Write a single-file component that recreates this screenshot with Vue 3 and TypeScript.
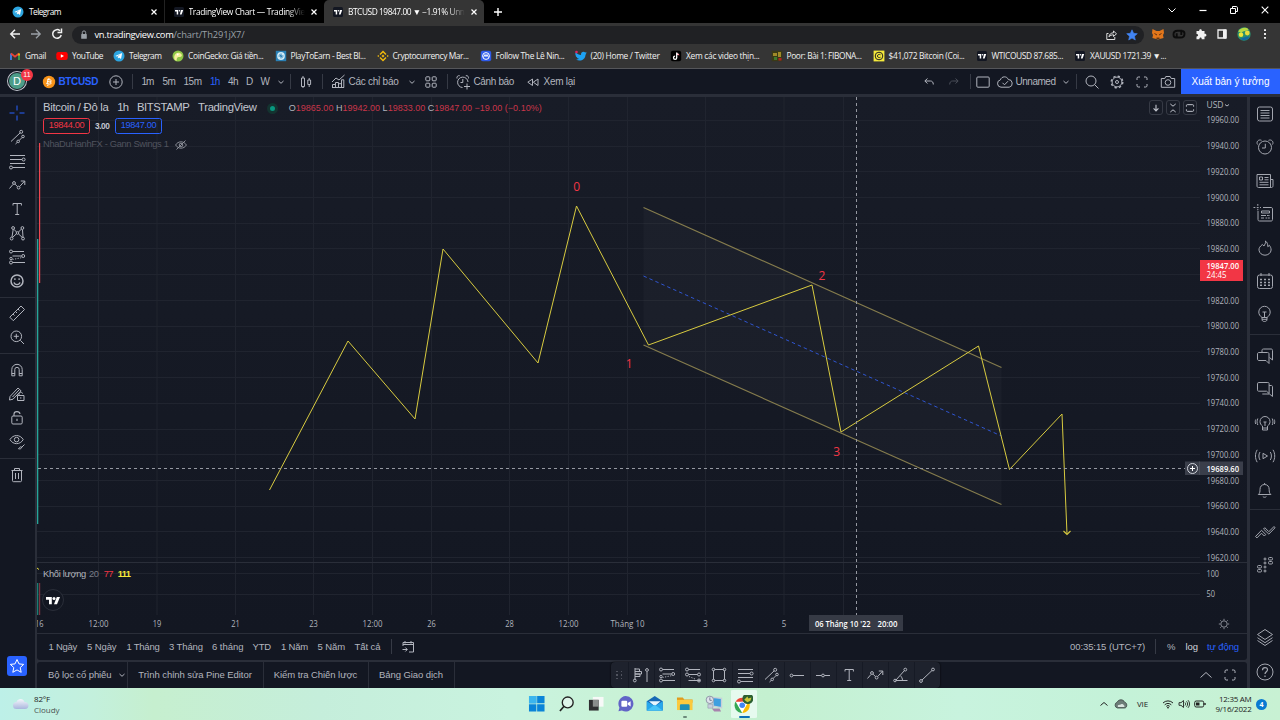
<script setup lang="ts">
import { h, type Directive, type FunctionalComponent } from 'vue'

/* Icons are drawn on an 18 x 18 grid, centred on 9,9. */
const icons: Record<string, string> = {
  cross: '<path d="M9 1.5v5M9 11.5v5M1.5 9h5M11.5 9h5"/>',
  parallel: '<path d="M3 13.5 12.2 4.8M7.5 16 9.3 14.3M11 12.6l3.2-3.2"/><circle cx="13.2" cy="3.8" r="1.5"/><circle cx="15" cy="8.5" r="1.3"/><circle cx="10.2" cy="13.4" r="1.3"/>',
  fib: '<path d="M2 3.5h15M2 7.5h12M2 11.5h15M4.8 15.5H17"/><circle cx="15.6" cy="7.5" r="1.5"/><circle cx="3" cy="15.5" r="1.5"/>',
  path: '<path d="M1.5 12.5 5 8.4M7.2 8.2l2.2 2.4M11.8 10.4 16.5 5.2M12.8 5h4v4"/><circle cx="6" cy="7" r="1.4"/><circle cx="10.6" cy="11.6" r="1.4"/>',
  text: '<path d="M5 5.5v-2h8.400v2M9.200 3.500v11M7.200 14.500h4"/>',
  pattern: '<path d="M4 13 5.200 5.500M5.800 5.200 8.500 8M10.500 8l3-3M14.500 5.800 15 13M4.500 13.500l4-3.800M10.400 9.800l4 3.800"/><circle cx="3.600" cy="14.600" r="1.400"/><circle cx="5.100" cy="4" r="1.400"/><circle cx="9.500" cy="9" r="1.300"/><circle cx="14.400" cy="4" r="1.400"/><circle cx="15" cy="14.600" r="1.400"/>',
  forecast: '<path d="M4.500 3.500H16M4.500 8h9M4.500 14.500H17"/><path d="M4.500 11.500 14.500 9.500" stroke-dasharray="1.200 1.400"/><circle cx="3" cy="3.500" r="1.500"/><circle cx="15.200" cy="8" r="1.500"/><circle cx="3" cy="14.500" r="1.500"/><circle cx="3" cy="10.500" r="1.200"/>',
  emoji: '<circle cx="9" cy="9" r="6" stroke-width="1.500"/><path d="M6 10.300c.8 3 5.200 3 6 0" stroke-width="1.200"/><path d="M6.900 6.300v1.700M11.100 6.300v1.700" stroke-width="1.300"/>',
  ruler: '<path d="M1.800 13.200 13 2l3.500 3.500L5.300 16.700zM5 10l1.500 1.500M7.500 7.500 9 9M10 5l1.500 1.500"/>',
  zoomin: '<circle cx="8.300" cy="8.300" r="5.300"/><path d="m12.300 12.300 3.700 3.700M5.800 8.300h5M8.300 5.800v5"/>',
  magnet: '<path d="M3.800 14.800V8.500a5.200 5.200 0 0 1 10.400 0v6.300h-3V8.500a2.200 2.200 0 0 0-4.400 0v6.300zM3.800 12.500h3M11.200 12.500h3"/>',
  penlock: '<path d="m2 11.500 8-8.500 3 2.800-8 8.400-3.500.8zM4.500 12 11 5"/><path d="M9.500 10.500h6.500v5H9.500zM11 10.500V9c0-2.200 3.500-2.200 3.500-.5M12.800 12.200v1.500"/>',
  lock: '<rect x="3.800" y="7" width="10.400" height="8" rx="1.200"/><path d="M6 7V5c0-3 5.500-3.400 6 0M9 9.800v2.200" stroke-width="1.100"/>',
  eye: '<path d="M2 6.600c3-5.400 10.200-5.400 13.200 0-3 5.400-10.200 5.400-13.200 0z"/><circle cx="8.600" cy="6.600" r="2.300"/><path d="M16.500 11.500l-3 3M10.500 15.800c1.800.4 3.400-.3 3.200-1.800-1.500-.8-2 .5-3.200 1.800z"/>',
  trash: '<path d="M3.500 4.500h11M6.500 4.500v-2h5v2M4.500 4.500v10.200c0 .6.400 1 1 1h7c.6 0 1-.4 1-1V4.500M7.500 7v6M10.500 7v6"/>',
  star: '<path d="m9 2.500 2 4.400 4.700.5-3.500 3.200 1 4.700L9 12.900l-4.200 2.400 1-4.700-3.500-3.200 4.700-.5z"/>',
  plusc: '<circle cx="9" cy="9" r="6.200"/><path d="M6 9h6M9 6v6"/>',
  chev: '<path d="m6.500 8 2.500 2.300L11.500 8"/>',
  candles: '<path d="M4.500 5h3v8.500h-3zM6 3v2M6 13.500V15M10.800 7h2.800v4.500h-2.800zM12.200 5v2M12.200 11.500V14"/>',
  indic: '<path d="M3 9 7 5l3 2 5.500-5M3.500 14.500v-3h3v3M6.500 14.500V9.500h3v5M9.500 14.500v-3.800h3v3.800M12.500 14.500V6.800h2.300v7.700zM3 14.500h12"/>',
  grid4: '<rect x="3.800" y="3.800" width="4" height="4" rx=".8"/><rect x="10.200" y="3.800" width="4" height="4" rx=".8"/><rect x="3.800" y="10.200" width="4" height="4" rx=".8"/><rect x="10.200" y="10.200" width="4" height="4" rx=".8"/>',
  alarmp: '<path d="M8.500 14.500A5.200 5.200 0 1 1 14 9M3 5.500C2.500 3.500 4 2.300 5.700 2.700M11.800 2.700c2-.4 3.200 1.200 2.600 2.800M8.800 6v3.500H6.500M13 10.500v6M10 13.500h6"/>',
  rewind: '<path d="M8.500 6v6.500L3.800 9.200zM14 6v6.500L9.300 9.200z"/>',
  undo: '<path d="M7.500 5.500 4.800 8l2.700 2.500M5 8h5.500c1.700 0 2.800 1.200 2.800 3.500"/>',
  redo: '<path d="M10.500 5.500 13.200 8l-2.700 2.500M13 8H7.500c-1.700 0-2.800 1.200-2.800 3.500"/>',
  rect: '<rect x="2.800" y="4" width="12.400" height="10.200" rx="1"/>',
  cloud: '<path d="M5 14.200a3.700 3.700 0 0 1-.6-7.300C5.500 3 11 2.800 12.300 6.500a3.900 3.900 0 0 1 .9 7.700zM6.500 9.800l2 2 3.500-3.600"/>',
  search: '<circle cx="8" cy="8" r="5"/><path d="m11.700 11.700 3.800 3.800"/>',
  gear: '<circle cx="9" cy="9" r="4.900"/><circle cx="9" cy="9" r="1.500"/><circle cx="9" cy="9" r="5.800" stroke-dasharray="2.300 2.260" stroke-width="1.400"/>',
  full: '<path d="M4 7V5.200c0-.7.500-1.200 1.200-1.200H7M11 4h1.800c.7 0 1.200.5 1.200 1.200V7M14 11v1.800c0 .7-.5 1.200-1.200 1.200H11M7 14H5.200c-.7 0-1.200-.5-1.200-1.200V11"/>',
  camera: '<path d="M2.300 5.500h3.500l1-2h4.400l1 2h3.500v8.800H2.300z"/><circle cx="9" cy="9.500" r="2.800"/>',
  list: '<rect x="1.500" y="2" width="15" height="14" rx="2"/><path d="M4.500 5.500h9M4.500 8h9M4.500 10.500h9M4.500 13h9"/>',
  alarm: '<circle cx="9" cy="9.500" r="6.500"/><path d="M9.300 5.800v4.200H6M1.500 6.500C0 4 2.300 1 5.500 2.300M16.500 6.500c1.500-2.500-.8-5.500-4-4.200"/>',
  news: '<path d="M1 2.500h13.500v13H2.500c-1 0-1.500-.6-1.500-1.500zM14.500 7.500H17v6.200c0 1-.5 1.800-1.500 1.800h-1.200M3.500 5h3v3h-3zM8.500 5.500h4M8.500 7.800h4M3.500 10.300h9M3.500 12.800h9"/>',
  notes: '<path d="M2 6v8.500c0 1 .5 1.500 1.500 1.500H15c1 0 1.500-.5 1.500-1.500V4c0-1-.5-1.500-1.500-1.500H7M5.500 6h8v2h-8zM5 10.500h5M5 13h3"/><path d="M-2.500 2.500h2M.8 2.500H3M4 2.500h1M1.800-1v2M1.800 3.800v1.500M11 10.500h3M9.500 13H14" stroke-dasharray="1.800 .7"/>',
  fire: '<path d="M9.500 2c.5 2.500-1 3.500-1.500 5L6.300 5.500C4 7.500 2.700 9 3 11.200c.4 3 3 5 6 5s6-2.200 6.100-5.200c0-2-.8-3.500-1.700-4.700l-1.600 1.400C11.900 5 11 3 9.500 2z"/>',
  calendar: '<rect x="1.500" y="3" width="15" height="13.500" rx="2"/><path d="M5 1v3M13 1v3"/><path d="M4 7.500h2M8 7.500h2M12 7.500h2M4 10.500h2M8 10.500h2M12 10.500h2M4 13.300h2M8 13.300h2M12 13.300h2" stroke-width="1.500"/>',
  bulb: '<path d="M6 12.500C4 11 2.800 9.500 2.800 7a5.700 5.700 0 0 1 11.400 0c0 2.500-1.200 4-3.200 5.500v1.800c0 1.600-1 2.200-2.500 2.200S6 15.900 6 14.300zM6 12.500h5M6 14.300h5M6.500 7h4M8.500 7v5"/>',
  chats: '<path d="M6 5V3.500c0-1 .5-1.500 1.500-1.500H15c1 0 1.500.5 1.500 1.500V13l-3-2.500M3 5.500h8.500c1 0 1.500.5 1.500 1.500v9.500l-3-3H3c-1 0-1.500-.5-1.500-1.500V7c0-1 .5-1.500 1.500-1.500z"/>',
  chat2: '<path d="M2.800 2.500h9c1 0 1.300.4 1.300 1.300v9.700l-2.600-2.300H2.800c-1 0-1.300-.4-1.300-1.300V3.800c0-.9.400-1.300 1.300-1.300zM13.100 5.500h2c1 0 1.400.5 1.400 1.300v9.700l-3-2.500H6.300"/>',
  bulbs: '<path d="M6.500 12C5 11 4 9.600 4 7.500a5 5 0 0 1 10 0c0 2.100-1 3.500-2.500 4.500v2h-5zM6.500 14v2h5v-2M9 8v4M7.500 8h3M1.800 4.500c-1 2-1 4.500 0 6.500M16.200 4.500c1 2 1 4.500 0 6.500M-.3 5.500c-.6 1.500-.6 3 0 4.500M18.300 5.500c.6 1.500.6 3 0 4.500"/>',
  stream: '<path d="M7 6.300v5.400l4.500-2.700zM4 5c-1.500 2.300-1.500 5.700 0 8M14.300 5c1.500 2.300 1.500 5.700 0 8M1.200 2.800c-2.300 3.800-2.300 8.600 0 12.400M17 2.800c2.300 3.800 2.300 8.600 0 12.400"/>',
  bell: '<path d="M2.300 13.500c1.700-1.300 1.700-3 1.700-5 0-3 1.700-5 4.600-5s4.600 2 4.600 5c0 2 0 3.700 1.700 5zM6.800 15.500c.8 1 2.800 1 3.600 0M8.600 3.500V2"/>',
  waves: '<path d="m-.5 13.500 6-6.200 4.300 4.200 -1.500 1.500-2.800-2.800-4.500 4.700zM7.500 6l1.300-1.300 4 4L18 3.500l1 1.300-6.200 6.300z"/>',
  dom: '<g><rect x="1.500" y="9.500" width="4" height="2.500" rx="1"/><rect x="1.500" y="13.500" width="4" height="2.500" rx="1"/><rect x="12.500" y="1.500" width="4" height="2.500" rx="1"/><rect x="12.500" y="5.500" width="4" height="2.500" rx="1"/><circle cx="9" cy="3" r="1"/><circle cx="9" cy="7" r="1"/><circle cx="9" cy="11" r="1"/><circle cx="9" cy="15" r="1"/></g>',
  layers: '<path d="m9 .5 7.500 5L9 10.500l-7.500-5zM1.500 8.700 9 13.700l7.500-5M1.500 11.500 9 16.500l7.500-5"/>',
  help: '<circle cx="9" cy="9" r="8"/><path d="M6.500 7.200c0-3.500 5-3.400 5-.5 0 2-2.500 2-2.500 4.300M9 12.500v1.500" stroke-width="1.200"/>',
  profile: '<path d="M3 2v12M3 3h4.500v2.500H3M3 5.500h6.500V8H3M3 8h5v2.500H3M15 6v10"/><circle cx="2.800" cy="14.500" r="1.400"/><circle cx="15" cy="4" r="1.400"/>',
  long: '<path d="M4.500 3.500H16M4.500 8.500h9M4.500 14.500H16"/><path d="M5 10.500l6 2.500" stroke-dasharray="1.200 1.400"/><circle cx="3" cy="3.500" r="1.500"/><circle cx="15" cy="8.500" r="1.500"/><circle cx="3" cy="8.500" r="1.500"/><circle cx="15" cy="14.500" r="1.500"/>',
  square: '<path d="M3.500 4.500v9M14.500 4.500v9M4.500 3.500h9M4.500 14.500h9"/><circle cx="3.500" cy="3.500" r="1.300"/><circle cx="14.500" cy="3.500" r="1.300"/><circle cx="3.500" cy="14.500" r="1.300"/><circle cx="14.500" cy="14.500" r="1.300"/>',
  ray: '<path d="M5 9.500h11"/><circle cx="3.500" cy="9.500" r="1.400"/>',
  hline: '<path d="M2 9.500h5.500M10.500 9.500H16"/><circle cx="9" cy="9.500" r="1.400"/>',
  angle: '<path d="M3.500 14.500h12M4 14 12.500 4.500M10.500 14.500c0-2-.8-3.500-2-4.700"/><circle cx="13.300" cy="3.600" r="1.400"/><circle cx="3" cy="14.500" r="1.300"/>',
  line: '<path d="M4 14 14 4.500"/><circle cx="3" cy="15" r="1.400"/><circle cx="15" cy="3.500" r="1.400"/>',
  goto: '<path d="M4 8V4.500h10.500v9.500H10M4 6.500h10.500M6 3v2.500M12 3v2.500M3.500 11.500h4.500M6.300 9.500l2 2-2 2"/>',
  up: '<path d="m3.500 11.500 5.500-5 5.500 5"/>',
  sun: '<circle cx="9" cy="9" r="3.200"/><path d="M9 3.800v1.500M9 12.700v1.500M3.800 9h1.500M12.700 9h1.500M5.300 5.300l1 1M11.700 11.700l1 1M12.700 5.300l-1 1M6.300 11.700l-1 1"/>',
  down: '<path d="M9 5.500v6.500M6.300 9.500 9 12.200l2.700-2.700" stroke-width="1.200"/>',
  collapse: '<path d="M6 4.500 9 7l3-2.500M6 13.500 9 11l3 2.500" stroke-width="1.100"/>',
  restore: '<path d="M5 7.500V6.300c0-.6.4-1 1-1h6c.6 0 1 .4 1 1v1.200M5 10.500v1.200c0 .6.400 1 1 1h6c.6 0 1-.4 1-1v-1.200" stroke-width="1.100"/>',
  hidden: '<path d="M3 9c2.700-4.700 9.300-4.700 12 0-2.700 4.700-9.300 4.700-12 0zM4 14 14 4"/><circle cx="9" cy="9" r="2"/>',
  back: '<path d="M14 9H5M9 4.800 4.800 9 9 13.200" stroke-width="1.500"/>',
  fwd: '<path d="M4 9h9M9 4.800 13.200 9 9 13.200" stroke-width="1.300"/>',
  reload: '<path d="M13.200 10A4.300 4.300 0 1 1 12 5.800M13.500 3.500v4h-4" stroke-width="1.500"/>',
  padlock: '<rect x="6.200" y="8" width="5.600" height="4.800" rx=".6" fill="currentColor" stroke="none"/><path d="M7.300 8V6.600a1.700 1.700 0 0 1 3.400 0V8"/>',
  share: '<path d="M6.500 7.500H4.800v6h8V11M7 10.800c.3-2.500 2-4 4.500-4V5l3 2.800-3 2.700V8.800C9.500 8.800 8 9.500 7 10.800z" stroke-width=".9"/>',
  bstar: '<path d="m9 3.800 1.600 3.500 3.700.4-2.800 2.500.8 3.800L9 12.100 5.700 14l.8-3.800-2.800-2.500 3.700-.4z" fill="#4285f4" stroke="#4285f4" stroke-width=".6"/>',
  fox: '<path d="m3.500 4 4 2h3l4-2 .5 4-1 2 .6 3-3 .8L9 14.500 6.400 13.800l-3-.8.600-3-1-2z" fill="#e2761b" stroke="none"/><path d="M5.500 8.500 8 10M12.500 8.500 10 10" stroke="#63300d"/><path d="M7.500 12.700h3v1h-3z" fill="#2a1a10" stroke="none"/>',
  ext: '<path d="M6 12.500c-2 0-2.500-1-2.500-3C3.500 7 5 5.800 7.500 5.800h3.800V10M12 6c2 0 2.500 1 2.500 2.700 0 2.500-1.500 3.800-4 3.800H6.700V8.300" stroke="#0c0c0c" stroke-width="1.900"/>',
  puzzle: '<path d="M4.500 6h2.700c-.5-2.500 3.100-2.500 2.600 0h2.700v2.800c2.600-.5 2.600 3.200 0 2.700v2.700h-2.800c.3-2.300-2.500-2.300-2.300 0H4.500v-2.800c2.200.3 2.200-2.500 0-2.300z" fill="currentColor" stroke="none"/>',
  side: '<path d="M5 5h8v8H5z" stroke-width="1.300"/><path d="M10.500 5H13v8h-2.500z" fill="currentColor"/>',
  globe: '<circle cx="9" cy="9" r="6.700" fill="#2c8f6c" stroke="none"/><path d="M3.200 6.500C5 2.500 11 1.800 13.500 4.200c-1.500 2.500-5.500.8-7 3.800z" fill="#b6d844" stroke="none"/><circle cx="6" cy="9.800" r="2.300" fill="#efe53a" stroke="none"/><circle cx="12.300" cy="8" r="2.400" fill="#e9dc3e" stroke="none"/><path d="M5 13.500c3 0 5-2.500 9.500-2-1.500 4.200-6.500 5-9.500 2z" fill="#1268a2" stroke="none"/>',
  dots: '<path d="M9 4.200v1.900M9 8v1.900M9 11.900v1.900" stroke-width="1.900"/>',
  x: '<path d="m6.500 6.500 5 5M11.500 6.500l-5 5" stroke-width="1.200"/>',
  plus: '<path d="M5 9h8M9 5v8" stroke-width="1.400"/>',
  wchev: '<path d="M5.500 7.500 9 11l3.500-3.500"/>',
  wmin: '<path d="M5.500 9.500h7" stroke-width="1.200"/>',
  wres: '<path d="M5.500 7.500h5v5h-5zM7.500 7V5.500h3.700c.8 0 1.300.5 1.300 1.300v3.700H11"/>',
  wclose: '<path d="m5.700 5.700 6.600 6.600M12.300 5.700l-6.600 6.600" stroke-width="1.100"/>',
  telegram: '<circle cx="9" cy="9" r="5.500" fill="#2ca5e0" stroke="none"/><path d="m5.200 9 7-2.900-1.200 6-2-1.500-1 1-.3-1.800 3-2.600-3.800 2.400z" fill="#fff" stroke="none"/>',
  tv: '<rect x="4" y="4" width="10" height="10" rx="1.500" fill="#131722" stroke="none"/><path d="M5 7h3.200v4.500H6.700V8.500H5zM11 7h2.200l-1.600 4.500H9.900z" fill="#fff" stroke="none"/><circle cx="9.500" cy="7.700" r=".8" fill="#fff" stroke="none"/>',
  gmail: '<path d="M5 13V6.500" stroke="#4285f4" stroke-width="1.700"/><path d="M13 13V6.500" stroke="#34a853" stroke-width="1.700"/><path d="M5 6.500 9 9.700l4-3.200" stroke="#ea4335" stroke-width="1.800"/><path d="M13 6.500v2" stroke="#fbbc04" stroke-width="1.700"/>',
  youtube: '<rect x="3.300" y="5" width="11.400" height="8" rx="2.200" fill="#f00" stroke="none"/><path d="M7.800 7.200v3.600L11 9z" fill="#fff" stroke="none"/>',
  gecko: '<circle cx="9" cy="9" r="5.500" fill="#8dc647" stroke="none"/><path d="M5.500 12.500c-1-4 1-7 4-6.800 2 0 3.800 1.800 3.300 3.300-1 1.500-3.300.5-4.300 1.500s-.7 2.500-1 3.500z" fill="#f5ef9a" stroke="none"/><circle cx="8.700" cy="7.500" r=".9" fill="#fff" stroke="none"/>',
  p2e: '<rect x="3.800" y="3.800" width="10.400" height="10.400" fill="#2a80b5" stroke="none"/><circle cx="9" cy="9" r="3.900" fill="#cfeaf6" stroke="none"/><path d="M6.500 9h5M9 6.500v5M7.500 7.500l3 3" stroke="#2a80b5"/>',
  bnb: '<path d="m6 7.500 3-3 3 3M6 10.500l3 3 3-3" stroke="#f0b90b" stroke-width="1.500"/><path d="m9 7.500 1.500 1.500L9 10.500 7.500 9zM4.300 8l1 1-1 1-1-1zM13.700 8l1 1-1 1-1-1z" fill="#f0b90b" stroke="none"/>',
  cmc: '<rect x="3.800" y="3.800" width="10.400" height="10.400" rx="2" fill="#2f5bea" stroke="none"/><circle cx="9" cy="9" r="3.400" stroke="#fff"/><path d="M6.500 10.500 8 7.500l1 2.200 1-2.200 1.500 3" stroke="#fff" stroke-width=".9"/>',
  twitter: '<path d="M4 12.500c1.300.2 2.300-.1 3-.7-1.300-.1-2-1-2.100-1.500-1-.6-1.300-1.500-1.200-2.200C3 7 3.300 6 3.900 5.400 5.300 7 7 7.800 9 7.900c-.3-3 2.700-4 4.200-2.400l1.500-.4-.9 1.500.7 0-1 1.100c-.1 5-5.500 7.500-9.500 4.800z" fill="#1da1f2" stroke="none"/><circle cx="4.500" cy="5" r="1.300" fill="#e0245e" stroke="none"/>',
  tiktok: '<rect x="3.800" y="3.800" width="10.400" height="10.400" rx="2" fill="#000" stroke="none"/><path d="M9.700 5.500v5.200a1.600 1.600 0 1 1-1.600-1.600M9.700 5.500c.2 1.400 1 2 2.300 2.100" stroke="#fff" stroke-width="1.300"/><path d="M10.500 6.700c.4.800 1 1.300 1.900 1.400" stroke="#fe2c55" stroke-width=".7"/>',
  poor: '<rect x="3.800" y="3.800" width="10.400" height="10.400" fill="#3a3a16" stroke="none"/><path d="M5 6h4v3H5zM10 5h3v5h-3z" fill="#a08a28" stroke="none"/><path d="M6 10h3v3H6z" fill="#3f7a2c" stroke="none"/><path d="M10.500 11h3v2.500h-3z" fill="#b32222" stroke="none"/>',
  coindesk: '<rect x="3.600" y="3.600" width="10.800" height="10.800" fill="#f5ea3c" stroke="none"/><circle cx="9" cy="9" r="3.800" stroke="#222"/><path d="M10.500 7.800c-1-.8-3-.5-3 1.200s2 2 3 1.200" stroke="#222"/>'
}

const Ico: FunctionalComponent<{ n: string }> = (props) =>
  h('svg', { class: 'ico', width: 18, height: 18, viewBox: '0 0 18 18', innerHTML: icons[props.n] })
Ico.props = ['n']

/* Tracks a label out or in so that it fills the given width. */
const vFit: Directive<HTMLElement, number> = {
  mounted(el, { value }) {
    const range = document.createRange()
    range.selectNodeContents(el)
    const width = range.getBoundingClientRect().width
    const count = (el.textContent ?? '').length
    if (value && count > 1) el.style.letterSpacing = `${(value - width) / count}px`
  }
}

interface Cell { t?: string; i?: string; w: number; f?: number; c?: string }

const tabs = [
  { i: 'telegram', t: 'Telegram', w: 165, f: 32, c: 'first' },
  { i: 'tv', t: 'TradingView Chart — TradingVie', w: 159, f: 116.5, c: '' },
  { i: 'tv', t: 'BTCUSD 19847.00 ▼ −1.91% Unn', w: 160, f: 116.5, c: 'active' }
]
const bookmarks: Cell[] = [
  { i: 'gmail', t: 'Gmail', w: 47, f: 21 },
  { i: 'youtube', t: 'YouTube', w: 57, f: 31 },
  { i: 'telegram', t: 'Telegram', w: 59, f: 32.5 },
  { i: 'gecko', t: 'CoinGecko: Giá tiền...', w: 102.5, f: 75.5 },
  { i: 'p2e', t: 'PlayToEarn - Best Bl...', w: 102, f: 75 },
  { i: 'bnb', t: 'Cryptocurrency Mar...', w: 103, f: 76 },
  { i: 'cmc', t: 'Follow The Lê Nin...', w: 95, f: 69 },
  { i: 'twitter', t: '(20) Home / Twitter', w: 95.5, f: 69 },
  { i: 'tiktok', t: 'Xem các video thịn...', w: 100.5, f: 73.5 },
  { i: 'poor', t: 'Poor: Bài 1: FIBONA...', w: 102, f: 75 },
  { i: 'coindesk', t: '$41,072 Bitcoin (Coi...', w: 103, f: 76 },
  { i: 'tv', t: 'WTICOUSD 87.685...', w: 98.5, f: 71.5 },
  { i: 'tv', t: 'XAUUSD 1721.39 ▼...', w: 100, f: 76 }
]
const header: Cell[] = [
  { t: '1m', w: 21, f: 12 }, { t: '5m', w: 21, f: 13 }, { t: '15m', w: 26.5, f: 18 },
  { t: '1h', w: 18, f: 9.5, c: 'on' }, { t: '4h', w: 18, f: 10 }, { t: 'D', w: 14.5 }, { t: 'W', w: 11.5 },
  { i: 'chev', w: 18 }, { w: 7, c: 'bar' }, { i: 'candles', w: 25 }, { w: 7, c: 'bar' },
  { i: 'indic', w: 19.5 }, { t: 'Các chỉ báo', w: 54, f: 50 }, { i: 'chev', w: 12 }, { i: 'grid4', w: 32, c: 'mid' },
  { w: 7, c: 'bar' }, { i: 'alarmp', w: 20 }, { t: 'Cảnh báo', w: 50, f: 40.5 }, { i: 'rewind', w: 20 },
  { t: 'Xem lại', w: 40, f: 31.5 }
]
const headerRight: Cell[] = [
  { i: 'undo', w: 25 }, { i: 'redo', w: 25, c: 'dim' }, { w: 4.5, c: 'bar' }, { i: 'rect', w: 22 },
  { i: 'cloud', w: 19.5 }, { t: 'Unnamed', w: 41, f: 40 }, { i: 'chev', w: 19.5 }, { w: 6.5, c: 'bar' },
  { i: 'search', w: 25.5 }, { i: 'gear', w: 25 }, { i: 'full', w: 25.5 }, { i: 'camera', w: 22.5 }
]
const leftGroups = [
  ['cross', 'parallel', 'fib', 'path', 'text', 'pattern', 'forecast', 'emoji'],
  ['ruler', 'zoomin'],
  ['magnet', 'penlock', 'lock', 'eye'],
  ['trash']
]
const rightGroups = [
  ['list', 'alarm', 'news', 'notes', 'fire', 'calendar', 'bulb'],
  ['chats', 'chat2', 'bulbs', 'stream', 'bell'],
  ['waves', 'dom']
]
const ranges: Cell[] = [
  { t: '1 Ngày', w: 38.5, f: 28.5 }, { t: '5 Ngày', w: 39.5, f: 29.5 }, { t: '1 Tháng', w: 42.5, f: 33 },
  { t: '3 Tháng', w: 43, f: 34 }, { t: '6 tháng', w: 40.5, f: 31.5 }, { t: 'YTD', w: 28.5, f: 18.5 },
  { t: '1 Năm', w: 36.5, f: 27 }, { t: '5 Năm', w: 37, f: 27.5 }, { t: 'Tất cả', w: 36, f: 26 }
]
const panels = [
  { t: 'Bộ lọc cổ phiếu', w: 90.5, f: 63.5, drop: true },
  { t: 'Trình chỉnh sửa Pine Editor', w: 136, f: 113.5, drop: false },
  { t: 'Kiểm tra Chiến lược', w: 105, f: 83.5, drop: false },
  { t: 'Bảng Giao dịch', w: 86, f: 64, drop: false }
]
const favourites = ['profile', 'forecast', 'long', 'square', 'fib', 'parallel', 'ray', 'hline', 'text', 'path', 'angle', 'line']

/* Price scale: 20 points every 25.73 px. */
const prices = Array.from({ length: 18 }, (_, k) => ({ label: `${19960 - k * 20}.00`, y: 120.3 + k * 25.73 }))
const times = [
  { x: 98.5, t: '12:00', w: 20 }, { x: 157, t: '19', w: 8.5 }, { x: 235.5, t: '21', w: 8.5 }, { x: 313.5, t: '23', w: 8.5 },
  { x: 372.5, t: '12:00', w: 20 }, { x: 431.5, t: '26', w: 8.5 }, { x: 509.5, t: '28', w: 8.5 }, { x: 568.5, t: '12:00', w: 20 },
  { x: 627.5, t: 'Tháng 10', w: 34 }, { x: 705.5, t: '3', w: 4.5 }, { x: 784, t: '5', w: 4.5 }, { x: 843.5, t: '', w: 0 }
]
const swing = '269.5,490 348,341 415,419 443,249 538,363 576.5,206 648.5,345 812,285 841,432 978.5,346 1009.5,469.5 1062,414 1067,534'
const waves = [{ n: '0', x: 576.8, y: 190.5 }, { n: '1', x: 629.3, y: 368 }, { n: '2', x: 822, y: 279.5 }, { n: '3', x: 836.8, y: 455.5 }]
</script>

<template>
  <div class="desktop">
    <div class="tabstrip">
      <div v-for="(tab, k) in tabs" :key="k" class="tab" :class="tab.c" :style="{ width: tab.w + 'px' }">
        <Ico :n="tab.i" />
        <span class="tabtitle"><span v-fit="tab.f">{{ tab.t }}</span></span>
        <Ico n="x" class="tabx" />
      </div>
      <Ico n="plus" class="newtab" />
      <div class="winctl"><Ico n="wchev" /><Ico n="wmin" /><Ico n="wres" /><Ico n="wclose" /></div>
    </div>

    <div class="addressbar">
      <div class="nav"><Ico n="back" /><Ico n="fwd" class="faded" /><Ico n="reload" /></div>
      <div class="omnibox">
        <Ico n="padlock" class="faded" />
        <span class="host" v-fit="79">vn.tradingview.com</span><span class="rest" v-fit="71">/chart/Th291jX7/</span>
        <span class="omniright"><Ico n="share" /><Ico n="bstar" /></span>
      </div>
      <div class="exts"><Ico n="fox" /><Ico n="ext" /><Ico n="puzzle" /><Ico n="side" /><Ico n="globe" /><Ico n="dots" /></div>
    </div>

    <div class="bookmarks">
      <div v-for="b in bookmarks" :key="b.t" class="bookmark" :style="{ width: b.w + 'px' }">
        <Ico :n="b.i!" /><span v-fit="b.f!">{{ b.t }}</span>
      </div>
    </div>

    <div class="header">
      <div class="avatar"><span class="face">D</span><span class="count">11</span></div>
      <svg class="coin" width="14" height="14" viewBox="0 0 14 14"><circle cx="7" cy="7" r="6.200" fill="#f7931a" /><path d="M5.300 4.300l3.200.7c1.200.4 1 1.900-.4 1.900 1.600.3 1.300 2.400-.4 2.200l-3.200-.6M6 4.500 5 8.800M6 6.600l2 .4M7 3l-.3 1.500M6 9.500l-.3 1.500" fill="none" stroke="#fff" stroke-width="1" /></svg>
      <span class="symbol" v-fit="39.500">BTCUSD</span>
      <Ico n="plusc" />
      <span class="bar first"></span>
      <span v-for="(c, k) in header" :key="k" class="cell" :class="c.c" :style="{ width: c.w + 'px' }">
        <Ico v-if="c.i" :n="c.i" /><span v-else-if="c.t" v-fit="c.f ?? 0">{{ c.t }}</span>
      </span>
      <span class="grow"></span>
      <span v-for="(c, k) in headerRight" :key="'r' + k" class="cell" :class="c.c" :style="{ width: c.w + 'px' }">
        <Ico v-if="c.i" :n="c.i" /><span v-else-if="c.t" v-fit="c.f ?? 0">{{ c.t }}</span>
      </span>
      <button class="publish"><span v-fit="78">Xuất bản ý tưởng</span></button>
    </div>

    <div class="workspace">
      <aside class="tools">
        <div v-for="(g, k) in leftGroups" :key="k" class="group" :class="'g' + k">
          <Ico v-for="n in g" :key="n" :n="n" :class="{ blue: n === 'cross' }" />
        </div>
        <div class="fav"><Ico n="star" /></div>
      </aside>

      <main class="center">
        <section class="chart">
          <svg class="canvas" width="1210" height="536" viewBox="37 97 1210 536">
            <g stroke="#20242f">
              <line v-for="t in times" :key="t.x" :x1="t.x" :x2="t.x" y1="97" y2="615" />
              <line v-for="p in prices" :key="p.y" x1="37" x2="1200" :y1="Math.floor(p.y) + .5" :y2="Math.floor(p.y) + .5" />
              <line x1="37" x2="1200" y1="573.5" y2="573.5" />
              <line x1="37" x2="1200" y1="594.5" y2="594.5" />
              <line x1="37" x2="1247" y1="562.5" y2="562.5" stroke="#2a2e39" />
            </g>
            <rect x="37" y="239" width="1.300" height="285" fill="#26a69a" />
            <rect x="39" y="143" width="1.200" height="140" fill="#ef4650" />
            <rect x="37" y="583" width="1.300" height="32" fill="#1d7d73" />
            <rect x="39" y="583" width="1.200" height="32" fill="#7d3440" />
            <path d="M37 568l2 1.500" stroke="#e8dd3b" />
            <path d="M643.500 207.500 1001.500 367.500V504.500L643.500 345z" fill="#fff" fill-opacity=".022" />
            <path d="M643.500 207.500 1001.500 367.500M643.500 345 1001.500 504.500" stroke="#857c4d" stroke-width="1.200" />
            <path d="M643.500 276 1001.500 436" stroke="#2f55d0" stroke-dasharray="3.500 3" />
            <polyline :points="swing" fill="none" stroke="#d8cb40" stroke-width="1" />
            <path d="M1063.500 531l3.500 3.500 3.500-3.500" fill="none" stroke="#d8cb40" stroke-width="1.100" />
            <path d="M856.500 97v518M38 468.500h1148" stroke="#9598a1" stroke-dasharray="3 3" />
            <text v-for="w in waves" :key="w.n" class="wave" :x="w.x" :y="w.y">{{ w.n }}</text>
            <g class="axis" lengthAdjust="spacingAndGlyphs">
              <template v-for="p in prices" :key="p.label"><text v-if="p.label !== '19840.00'" x="1206.500" :y="p.y + 3.100" textLength="32.500" lengthAdjust="spacingAndGlyphs">{{ p.label }}</text></template>
              <text x="1206.500" y="577" textLength="12.500" lengthAdjust="spacingAndGlyphs">100</text>
              <text x="1206.500" y="597" textLength="8.500" lengthAdjust="spacingAndGlyphs">50</text>
              <text x="1206.500" y="107.800" textLength="17" lengthAdjust="spacingAndGlyphs">USD</text>
              <path d="M1225 104.500l2 1.500 2-1.500" stroke="#b2b5be" fill="none" />
              <text x="35" y="627" textLength="8.500" lengthAdjust="spacingAndGlyphs">16</text>
              <template v-for="t in times" :key="t.x"><text v-if="t.t" :x="t.x - t.w / 2" y="627" :textLength="t.w" lengthAdjust="spacingAndGlyphs">{{ t.t }}</text></template>
            </g>
            <rect x="1200" y="260" width="43" height="21" fill="#f23645" />
            <g class="axis tag"><text x="1206.500" y="269.200" textLength="32.500" lengthAdjust="spacingAndGlyphs">19847.00</text><text x="1206.500" y="278.200" textLength="20" lengthAdjust="spacingAndGlyphs" class="thin">24:45</text></g>
            <rect x="1185" y="461.500" width="58" height="13.500" fill="#3a3e4a" />
            <path d="M1199.500 461.500v13.500" stroke="#4a4e59" />
            <circle cx="1192.500" cy="468.500" r="5" fill="none" stroke="#d1d4dc" /><path d="M1190 468.500h5M1192.500 466v5" stroke="#fff" />
            <g class="axis tag"><text x="1206.500" y="471.500" textLength="32.500" lengthAdjust="spacingAndGlyphs">19689.60</text></g>
            <rect x="809" y="615" width="94" height="16" fill="#363a45" />
            <g class="axis tag"><text x="815" y="627" textLength="55.500" lengthAdjust="spacingAndGlyphs">06 Tháng 10 '22</text><text x="877.500" y="627" textLength="20" lengthAdjust="spacingAndGlyphs">20:00</text></g>
          </svg>
          <div class="legend">
            <div class="title">
              <span v-fit="65.500">Bitcoin / Đô la</span><span v-fit="11">1h</span><span v-fit="52.500">BITSTAMP</span><span v-fit="58.500">TradingView</span>
              <i class="live"></i>
              <span class="ohlc" v-fit="253">O<b>19865.00</b> H<b>19942.00</b> L<b>19833.00</b> C<b>19847.00</b> <b>−19.00 (−0.10%)</b></span>
            </div>
            <div class="quotes"><span class="sell"><span v-fit="35.500">19844.00</span></span><span class="spread" v-fit="14.500">3.00</span><span class="buy"><span v-fit="35.500">19847.00</span></span></div>
            <div class="study"><span v-fit="125.500">NhaDuHanhFX - Gann Swings 1</span><Ico n="hidden" /></div>
          </div>
          <div class="volume"><span v-fit="43">Khối lượng</span><span class="len" v-fit="9.500">20</span><span class="red" v-fit="9">77</span><span class="yel" v-fit="12.500">111</span></div>
          <div class="logo"><svg width="16" height="9" viewBox="0 0 16 9"><path d="M1 1h5.800v7.200H4V3.800H1zM11.800 1H15l-3 7.200H9z" fill="#fff" /><circle cx="9" cy="2.500" r="1.500" fill="#fff" /></svg></div>
          <div class="panebtns"><span><Ico n="down" /></span><span><Ico n="collapse" /></span><span><Ico n="restore" /></span></div>
          <Ico n="sun" class="axisgear" />
        </section>
        <div class="rangebar">
          <span v-for="r in ranges" :key="r.t" class="cell" :style="{ width: r.w + 'px' }"><span v-fit="r.f!">{{ r.t }}</span></span>
          <span class="bar"></span><Ico n="goto" class="goto" />
          <span class="grow"></span>
          <span v-fit="75">00:35:15 (UTC+7)</span><span class="bar clock"></span>
          <span class="pct">%</span><span class="log" v-fit="12.500">log</span><span class="auto" v-fit="32">tự động</span>
        </div>
        <div class="panelbar">
          <div v-for="p in panels" :key="p.t" class="panel" :style="{ width: p.w + 'px' }"><span v-fit="p.f">{{ p.t }}</span><Ico v-if="p.drop" n="chev" /></div>
          <div class="favbar">
            <span class="handle"><i v-for="k in 6" :key="k"></i></span>
            <span v-for="f in favourites" :key="f" class="favtool"><Ico :n="f" /></span>
          </div>
          <span class="panelctl"><Ico n="up" /><Ico n="full" /></span>
        </div>
      </main>

      <aside class="widgets">
        <div v-for="(g, k) in rightGroups" :key="k" class="group" :class="'w' + k"><Ico v-for="n in g" :key="n" :n="n" /></div>
        <div class="group foot"><Ico n="layers" /><Ico n="help" /></div>
      </aside>
    </div>

    <div class="taskbar">
      <div class="weather">
        <svg width="18" height="14" viewBox="0 0 18 14"><defs><linearGradient id="wc" x1="0" y1="0" x2="0" y2="1"><stop offset="0" stop-color="#f4f6fb" /><stop offset="1" stop-color="#a9b6dd" /></linearGradient></defs><path d="M4.500 12a3.500 3.500 0 0 1 0-7C6 1 11.500 1.300 12.500 5c5-.3 5.500 7 .5 7z" fill="url(#wc)" /></svg>
        <div><p v-fit="16">82°F</p><p class="sub" v-fit="25.500">Cloudy</p></div>
      </div>
      <div class="apps">
        <span class="app"><svg viewBox="0 0 18 18"><path d="M1 1h7.600v7.600H1zM9.400 1H17v7.600H9.400zM1 9.400h7.600V17H1zM9.400 9.400H17V17H9.400z" fill="#0a84d8" /><path d="M1 1h7.600v7.600H1z" fill="#3bb5ee" /></svg></span>
        <span class="app"><svg viewBox="0 0 18 18"><circle cx="10" cy="7.700" r="5.600" fill="#dff5ea" stroke="#222" stroke-width="1.400" /><path d="M6.200 11.500 2 16.500" stroke="#222" stroke-width="1.700" /></svg></span>
        <span class="app"><svg viewBox="0 0 18 18"><path d="M6 2h11v10H6z" fill="#f7f9f8" /><path d="M2 5h10v11H2z" fill="#2f2f31" /><path d="M6 5h6v7H6z" fill="#8a8d8c" /></svg></span>
        <span class="app"><svg viewBox="0 0 18 18"><path d="M9 1a8 8 0 1 1-4 15l-3.500.7L2.500 13A8 8 0 0 1 9 1z" fill="#6264c7" /><rect x="4.500" y="6" width="6" height="6" rx="1" fill="#fff" /><path d="m11 8.300 3-2v5.400l-3-2z" fill="#fff" /></svg></span>
        <span class="app"><svg viewBox="0 0 18 18"><path d="M.8 6.500 9 1l8.200 5.500V16H.8z" fill="#1769b5" /><path d="M4 5h10v5H4z" fill="#1769b5" /><path d="M3 6.500h12l-6 5z" fill="#e9f6ff" /><path d="M.8 6.500 9 11.500l8.200-5V16H.8z" fill="#27a7ec" /><path d="M.8 16 9 10l8.200 6z" fill="#47c4f8" /></svg></span>
        <span class="app run"><svg viewBox="0 0 18 18"><path d="M1 2.500h6l1.500 2H17V8H1z" fill="#e09b1f" /><path d="M1 5h16v10.500H1z" fill="#fbc93d" /><path d="M4 11c0-1 .5-1.500 1.500-1.500h7c1 0 1.500.500 1.500 1.500v4.500H4z" fill="#1c8fb5" /></svg></span>
        <span class="app"><svg viewBox="0 0 18 18"><path d="M7.500 2.500l9.500 1v9.500l-8.500-1.500z" fill="#3f9fe0" stroke="#c7cfda" stroke-width="1.400" /><circle cx="5" cy="5" r="3.800" fill="#dfe3ec" stroke="#8d94a5" /><path d="M5 2.500v3h2" fill="none" stroke="#777f92" /><path d="M3 9.500h5v4H3z" fill="#c8cedd" stroke="#99a1b5" stroke-width=".7" /><path d="M7 14h8l1.500 3h-7z" fill="#a884ad" /></svg></span>
        <span class="app open"><svg viewBox="0 0 18 18"><circle cx="8" cy="10" r="7.500" fill="#fff" /><path d="M1.500 6.500A7.500 7.500 0 0 1 14.500 6.500H8z" fill="#ea4335" /><path d="M1.500 6.300 8 17.500A7.500 7.500 0 0 1 1.500 6.300z" fill="#34a853" /><path d="M14.500 6.500A7.500 7.500 0 0 1 8 17.500l3-6z" fill="#fbbc04" /><circle cx="8" cy="10" r="3.500" fill="#fff" /><circle cx="8" cy="10" r="2.700" fill="#4285f4" /><circle cx="13.500" cy="3.500" r="5.300" fill="#2b5f31" /><path d="M10 4.500l3-3 1 2 3-1-1 3-3 1.500z" fill="#c9c93a" /></svg></span>
      </div>
      <div class="tray">
        <svg width="10" height="8" viewBox="0 0 10 8"><path d="m1.500 5.500 3.500-3 3.500 3" fill="none" stroke="#222" /></svg>
        <svg class="drive" width="14" height="12" viewBox="0 0 14 12"><path d="M3.500 10a3 3 0 0 1-.3-5.800C4.500 1 9.500 1 10.500 4.200 13.500 4.500 13.500 10 10.500 10z" fill="#6d7d78" stroke="#3a4442" stroke-width=".8" /><path d="M4 9c-1-1.500 1-2.500 2-2 1-1.500 3.500-1 4 .5.800.3.800 1.300 0 1.500z" fill="#d9e4df" /></svg>
        <span class="lang" v-fit="11">VIE</span>
        <svg width="12" height="10" viewBox="0 0 12 10"><path d="M1 4a7 7 0 0 1 10 0M2.700 5.800a4.700 4.700 0 0 1 6.600 0M4.300 7.300a2.400 2.400 0 0 1 3.400 0" fill="none" stroke="#222" /><circle cx="6" cy="8.600" r=".9" fill="#222" /></svg>
        <svg width="12" height="10" viewBox="0 0 12 10"><path d="M1 3.700h2L5.500 1.500v7L3 6.300H1zM7 3.500c.8 1 .8 2 0 3M8.500 2.300c1.500 1.700 1.500 3.700 0 5.400M10 1.200c2 2.300 2 5.300 0 7.600" fill="none" stroke="#222" stroke-width=".9" /></svg>
        <svg width="12" height="8" viewBox="0 0 12 8"><rect x=".7" y="1" width="9" height="6" rx="1.500" fill="none" stroke="#222" /><path d="M2 2.500h3.500v3H2z" fill="#222" /><path d="M11 3v2" stroke="#222" stroke-width="1.400" /></svg>
        <div class="clocktext"><p v-fit="32.500">12:35 AM</p><p v-fit="36">9/16/2022</p></div>
        <span class="notice">4</span>
      </div>
    </div>
  </div>
</template>

<style>
body { background: #131722; overflow: hidden; }
</style>

<style scoped>
.desktop { width: 1280px; height: 720px; display: flex; flex-direction: column; overflow: hidden; font-family: "Liberation Sans", Arial, sans-serif; font-size: 9.5px; color: #b2b5be; white-space: nowrap; line-height: 1; }
.ico { display: block; flex: none; fill: none; stroke: currentColor; stroke-width: 1; overflow: visible; }
.grow { flex: 1; }
p { margin: 0; }

.tabstrip { height: 23px; flex: none; display: flex; background: #000; color: #fff; font-family: "Open Sans", "Noto Sans", sans-serif; font-size: 8.4px; }
.tab { display: flex; align-items: center; box-sizing: border-box; padding-left: 5px; padding-right: 2px; }
.tab.first { padding-left: 9px; border-right: 1px solid #222; padding-right: 1px; }
.tab.active { background: #353535; border-radius: 5px 5px 0 0; }
.tabtitle { flex: 1; margin-left: .5px; line-height: 13px; -webkit-mask-image: linear-gradient(90deg, #000 85%, transparent); mask-image: linear-gradient(90deg, #000 85%, transparent); }
.active .tabtitle { margin-left: 1px; }
.first .tabtitle { margin-left: 2px; -webkit-mask-image: none; mask-image: none; }
.newtab { margin: 2.500px 0 0 5px; }
.winctl { margin-left: auto; display: flex; gap: 12.700px; padding: .5px 6.500px 0 0; }

.addressbar { height: 22px; flex: none; display: flex; align-items: center; background: #353535; color: #f1f1f1; font-family: "Open Sans", "Noto Sans", sans-serif; }
.nav { display: flex; gap: 3px; width: 66px; padding-left: 6px; }
.faded { color: #9aa0a6; }
.omnibox { width: 1072px; height: 18px; margin-top: 1px; box-sizing: border-box; border-radius: 9px; background: #202124; display: flex; align-items: center; padding-left: 3px; padding-right: 3px; font-size: 9.330px; }
.host { color: #fff; margin-left: 1.500px; }
.rest { color: #9aa0a6; }
.omniright { margin-left: auto; display: flex; gap: 3px; }
.exts { display: flex; gap: 3.500px; margin-left: auto; padding-right: 6px; }

.bookmarks { height: 22px; flex: none; display: flex; align-items: center; background: #353535; border-bottom: 1px solid #55565a; padding-bottom: 1px; color: #f0f0f0; font-family: "Open Sans", "Noto Sans", sans-serif; font-size: 8.400px; padding-left: 6px; }
.bookmark { display: flex; align-items: center; flex: none; }
.bookmark span { margin-left: 1px; line-height: 12px; }

.header { height: 25px; flex: none; display: flex; align-items: center; background: #131722; border-bottom: 3px solid #2a2e39; font-size: 10px; }
.avatar { width: 33px; height: 25px; position: relative; margin-left: 8px; }
.face { position: absolute; left: 0; top: 3px; width: 16px; height: 16px; border-radius: 50%; background: #4c9c88; border: 1px solid #131722; box-shadow: 0 0 0 1px #c1c4cd; color: #fff; text-align: center; line-height: 16px; font-size: 11px; }
.count { position: absolute; left: 13px; top: 0; width: 12px; height: 12px; border-radius: 50%; background: #f23645; color: #fff; font-size: 7px; line-height: 12px; text-align: center; }
.coin { margin-left: .500px; flex: none; }
.symbol { width: 48.500px; margin-left: 3px; color: #2962ff; font-weight: bold; }
.bar { width: 1px; height: 15px; background: #363a45; flex: none; }
.bar.first { margin: 0 8.500px 0 7px; }
.cell { display: flex; align-items: center; flex: none; }
.cell.on { color: #2962ff; }
.cell.mid { justify-content: center; }
.cell.dim { color: #4a4e59; }
.cell.bar { height: 15px; background: linear-gradient(90deg, #363a45 1px, transparent 1px); }
.publish { width: 99px; height: 25px; border: 0; padding: 0; margin: 0; background: #2962ff; color: #fff; font: 10px "Liberation Sans", Arial, sans-serif; text-align: center; }

.workspace { height: 591px; flex: none; display: flex; background: #2a2e39; }
.tools { width: 35px; background: #131722; display: flex; flex-direction: column; align-items: center; }
.group { width: 100%; display: flex; flex-direction: column; align-items: center; box-sizing: border-box; }
.tools .group { gap: 6px; border-bottom: 1px solid #2a2e39; padding-right: 1px; }
.tools .blue { color: #2962ff; }
.g0 { height: 201px; padding-top: 7px; }
.g1 { height: 56px; padding-top: 6px; }
.tools .g2 { height: 105px; padding-top: 6.500px; }
.tools .g3 { border: 0; padding-top: 7px; }
.fav { margin: auto 1px 12.500px 0; width: 20px; height: 20px; border-radius: 3px; background: #2962ff; color: #fff; display: flex; align-items: center; justify-content: center; }

.center { width: 1210px; margin-left: 2px; display: flex; flex-direction: column; }
.chart { height: 536px; position: relative; background: linear-gradient(#181c27, #131722); }
.canvas { display: block; }
.wave { font-family: "Open Sans", "Noto Sans", sans-serif; font-size: 12px; fill: #f23645; text-anchor: middle; }
.axis { font-family: "Open Sans", "Noto Sans", sans-serif; font-size: 8.700px; fill: #b2b5be; }
.axis.tag { fill: #fff; font-weight: 600; }
.axis .thin { font-weight: 400; }

.legend { position: absolute; left: 6px; top: 4px; }
.title { display: flex; align-items: center; height: 14px; font-size: 11.300px; color: #c3c6cf; }
.title > span { margin-right: 8.700px; }
.live { width: 5px; height: 5px; border-radius: 50%; background: #089981; border: 3px solid #143330; margin: 0 11px 0 1.500px; }
.title .ohlc { font-size: 9px; color: #b2b5be; }
.ohlc b { font-weight: normal; color: #c9364a; }
.quotes { display: flex; align-items: center; margin-top: 3px; font-size: 9.200px; }
.sell, .buy { width: 45px; height: 14px; border: 1px solid #f23645; border-radius: 2.500px; color: #f23645; display: flex; align-items: center; justify-content: center; }
.buy { border-color: #2962ff; color: #2962ff; }
.spread { width: 15px; margin: 0 5px 0 5px; font-size: 8.300px; font-weight: bold; color: #c3c6cf; }
.study { display: flex; align-items: center; margin-top: 2px; height: 18px; font-size: 9.330px; color: #50535e; }
.study span { width: 128.500px; }
.study .ico { color: #9598a1; transform: scale(.9); }
.volume { position: absolute; left: 6px; top: 471px; display: flex; line-height: 12px; font-size: 9.300px; }
.len { margin: 0 5.300px 0 3px; color: #787b86; }
.red { color: #f23645; }
.yel { color: #f5e83b; margin-left: 5px; font-weight: bold; }
.logo { position: absolute; left: 5px; top: 492px; width: 20px; height: 20px; border-radius: 50%; border: 1px solid #2a2e39; background: #131722; display: flex; align-items: center; justify-content: center; }
.panebtns { position: absolute; left: 1112px; top: 3px; display: flex; gap: 3px; color: #c3c6cf; }
.panebtns span { width: 12px; height: 13px; border: 1px solid #363a45; border-radius: 3px; display: flex; align-items: center; justify-content: center; }
.panebtns .ico { transform: scale(.9); }
.axisgear { position: absolute; left: 1177.500px; top: 518px; color: #868993; }

.rangebar { height: 25px; border-top: 1px solid #2a2e39; background: #131722; border-radius: 0 0 3px 3px; display: flex; align-items: center; padding-left: 11.500px; padding-bottom: 1px; box-sizing: content-box; }
.rangebar .cell { line-height: 14px; }
.goto { margin-left: 7.500px; }
.clock { margin: 0 11.500px 0 9.500px; }
.pct { width: 18.500px; }
.log { width: 21.500px; color: #d1d4dc; }
.auto { width: 40px; color: #2962ff; }
.panelbar { margin-top: 2px; height: 26px; background: #131722; border-radius: 3px 3px 0 0; display: flex; align-items: center; position: relative; }
.panel { height: 26px; box-sizing: border-box; border-right: 1px solid #2a2e39; display: flex; align-items: center; justify-content: center; line-height: 14px; }
.panel:first-child { justify-content: flex-start; padding-left: 11px; }
.panel:first-child .ico { margin-left: 1px; }
.favbar { position: absolute; left: 574px; top: 0; height: 26px; display: flex; background: #1e222d; border-radius: 4px; box-shadow: 0 0 2px #000; }
.handle { width: 16.500px; display: grid; grid-template-columns: 1.500px 1.500px; gap: 2px 3px; place-content: center; }
.handle i { width: 1.500px; height: 1.500px; background: #50535e; }
.favtool { width: 25px; border-left: 1px solid #161a25; display: flex; align-items: center; justify-content: center; }
.panelctl { margin-left: auto; display: flex; gap: 6px; padding-right: 8px; }

.widgets { width: 30px; margin-left: 3px; background: #131722; display: flex; flex-direction: column; align-items: center; }
.widgets .group { gap: 15.400px; color: #a3a6af; }
.widgets .w0 { height: 238px; padding-top: 8px; border-bottom: 1px solid #2a2e39; }
.widgets .w1 { height: 175px; padding-top: 12px; border-bottom: 1px solid #2a2e39; }
.widgets .w2 { padding-top: 13px; }
.widgets .foot { margin-top: auto; padding-bottom: 7px; gap: 16px; }

.taskbar { height: 32px; flex: none; position: relative; display: flex; justify-content: space-between; background: linear-gradient(90deg, #bdf0e8 0, #c3f0dd 7%, #c6efcf 12%, #c5eedb 25%, #c9f3df 40%, #c9f2d5 50%, #c4f0d0 60%, #c8f3de 75%, #c4f2d8 88%, #c8f1d3 100%); color: #222; font-family: "Open Sans", "Noto Sans", sans-serif; font-size: 8px; }
.weather { display: flex; padding: 6px 0 0 12px; }
.weather svg { margin: 3px 4px 0 0; }
.weather p { height: 10.500px; line-height: 10.500px; }
.weather .sub { color: #4c5553; }
.apps { position: absolute; left: 523px; top: 2px; display: flex; gap: 1.500px; }
.app { width: 28px; height: 28px; display: flex; align-items: center; justify-content: center; position: relative; }
.app svg { width: 17.500px; height: 17.500px; }
.app.open { background: linear-gradient(90deg, transparent 1px, #e6faef 1px, #e6faef 27px, transparent 27px); border-radius: 3px; }
.app.open svg { width: 18.500px; height: 18.500px; }
.app.run::after, .app.open::after { content: ""; position: absolute; bottom: 0; left: 12px; width: 4px; height: 2px; border-radius: 1px; background: #6d8a7b; }
.app.open::after { left: 9px; width: 11px; background: #0b6fb8; }
.tray { display: flex; align-items: center; padding-right: 13px; }
.lang { width: 25px; margin-left: 9.500px; }
.tray svg + svg { margin-left: 4px; }
.tray .drive { margin-left: 5px; }
.clocktext { width: 45.500px; display: flex; flex-direction: column; align-items: flex-end; }
.clocktext p { line-height: 10px; height: 10px; }
.notice { width: 11px; height: 11px; border-radius: 50%; background: #0a7ad1; color: #fff; font-size: 7px; font-weight: bold; line-height: 11px; text-align: center; margin-left: 4.500px; }
</style>
